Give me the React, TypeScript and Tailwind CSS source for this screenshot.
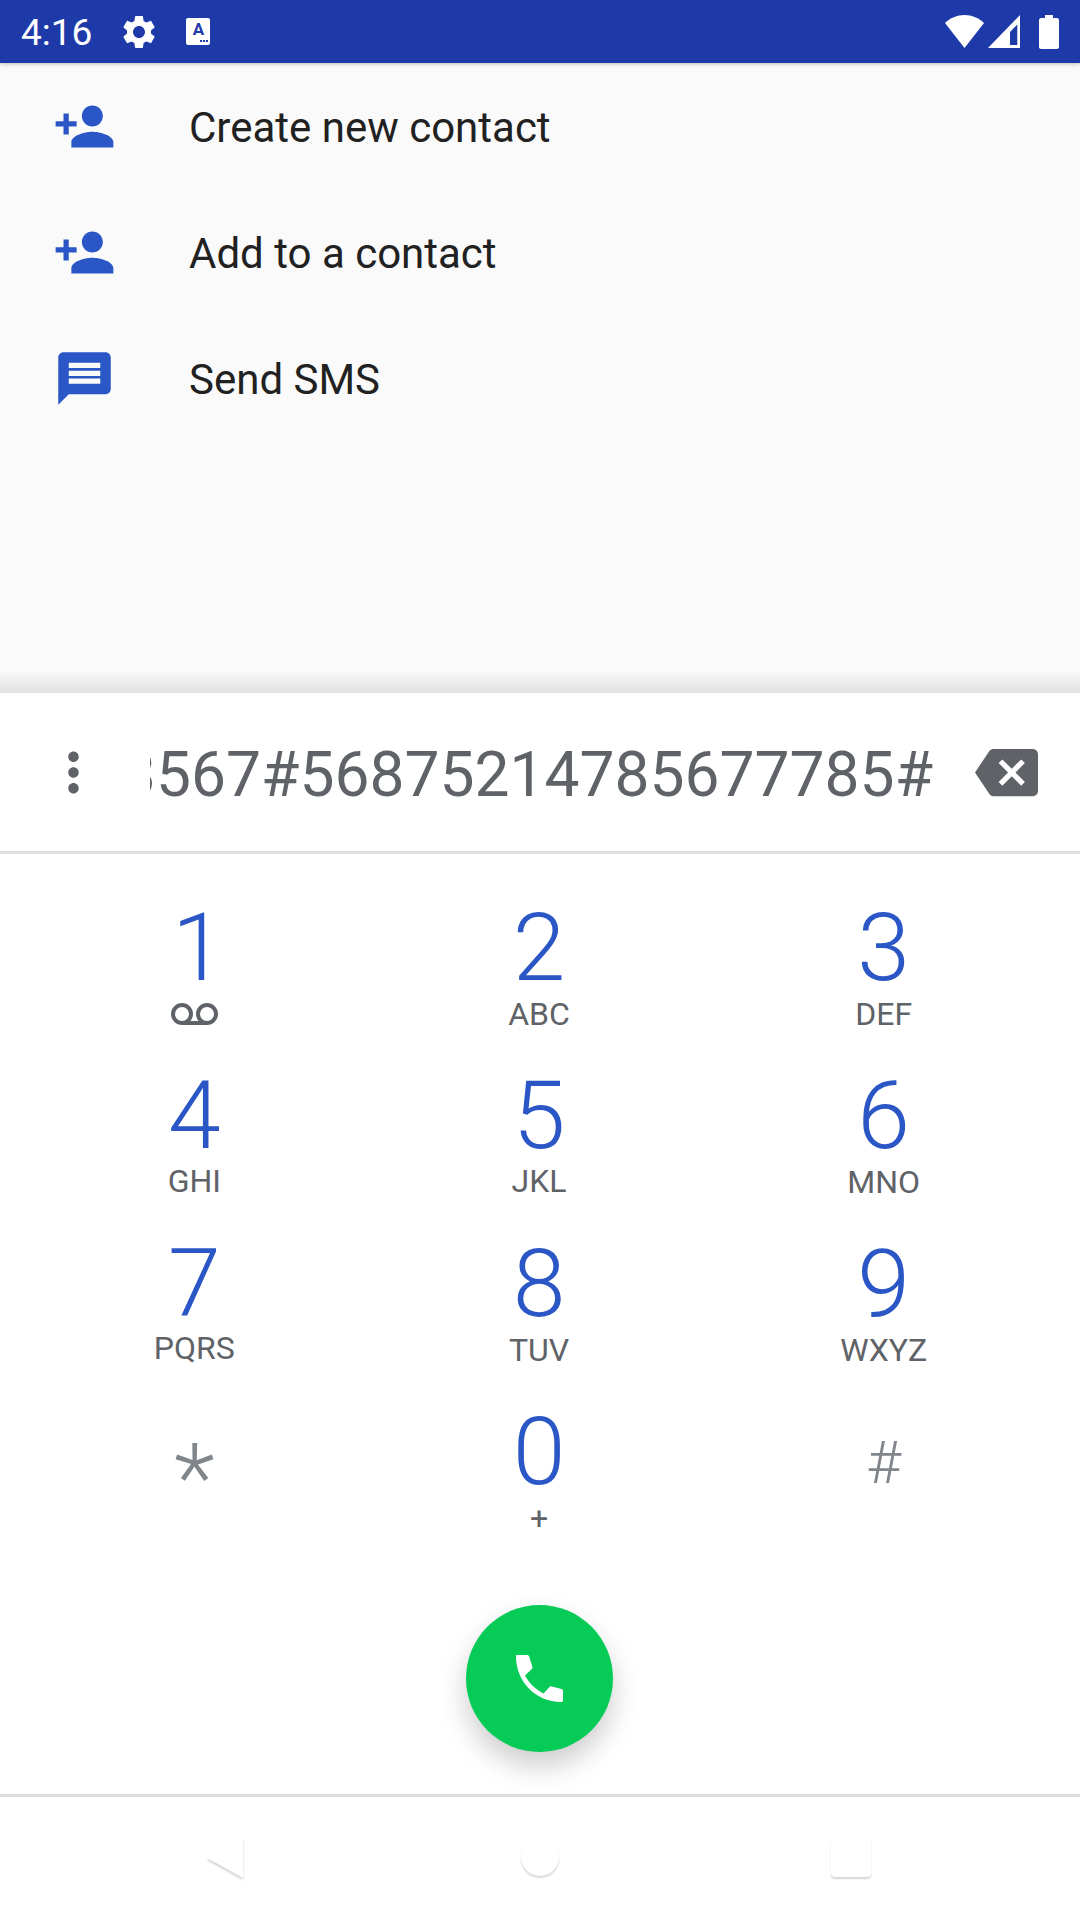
import * as React from "react";

const BLUE = "#2a56c6";

const keys = [
  { d: "1", sub: "vm", subClass: "mt-[3px]" },
  { d: "2", sub: "ABC", subClass: "mt-[3px]" },
  { d: "3", sub: "DEF", subClass: "mt-[3px]" },
  { d: "4", sub: "GHI", subClass: "mt-[2px]" },
  { d: "5", sub: "JKL", subClass: "mt-[2px]" },
  { d: "6", sub: "MNO", subClass: "mt-[3px]" },
  { d: "7", sub: "PQRS", subClass: "mt-[1px]" },
  { d: "8", sub: "TUV", subClass: "mt-[3px]" },
  { d: "9", sub: "WXYZ", subClass: "mt-[3px]" },
  { d: "*", sub: "", subClass: "" },
  { d: "0", sub: "+", subClass: "mt-[3px]" },
  { d: "#", sub: "", subClass: "" },
];

function Icon({ d, className, fill }: { d: string; className?: string; fill: string }) {
  return (
    <svg viewBox="0 0 24 24" className={className} fill={fill}>
      <path d={d} />
    </svg>
  );
}

const PERSON_ADD =
  "M15 12c2.21 0 4-1.79 4-4s-1.79-4-4-4-4 1.79-4 4 1.79 4 4 4zm-9-2V7H4v3H1v2h3v3h2v-3h3v-2H6zm9 4c-2.67 0-8 1.34-8 4v2h16v-2c0-2.66-5.33-4-8-4z";
const MESSAGE =
  "M20 2H4c-1.1 0-1.99.9-1.99 2L2 22l4-4h14c1.1 0 2-.9 2-2V4c0-1.1-.9-2-2-2zm-2 12H6v-2h12v2zm0-3H6V9h12v2zm0-3H6V6h12v2z";

function ActionRow({ icon, label }: { icon: string; label: string }) {
  return (
    <div className="flex h-[126px] items-center pl-[53px]">
      <Icon d={icon} fill={BLUE} className="h-[63px] w-[63px]" />
      <span className="ml-[73px] pt-[2px] text-[42px] text-[#212121]">{label}</span>
    </div>
  );
}

function DialKey({ d, sub, subClass }: { d: string; sub: string; subClass: string }) {
  let digitClass = "text-[95px] leading-[95px] font-light text-[#2a56c6]";
  if (d === "1") digitClass = "pl-[8px] text-[95px] leading-[95px] font-light text-[#2a56c6]";
  if (d === "*") digitClass = "mt-[26px] text-[95px] leading-[95px] font-light text-[#80868b]";
  if (d === "#") digitClass = "mt-[11px] text-[60px] leading-[95px] font-light text-[#80868b]";
  return (
    <div className="flex h-[168px] flex-col items-center">
      <div className={digitClass}>{d}</div>
      {sub === "vm" ? (
        <svg viewBox="0 0 47 22" className="mt-[8px] h-[22px] w-[47px]" fill="none" stroke="#5f6368" strokeWidth="4">
          <circle cx="11" cy="11" r="9" />
          <circle cx="36" cy="11" r="9" />
          <path d="M11 20h25" />
        </svg>
      ) : (
        <div className={`${subClass} text-[32px] leading-[32px] text-[#5f6368]`}>{sub}</div>
      )}
    </div>
  );
}

export default function App() {
  return (
    <div className="flex h-[1920px] w-[1080px] flex-col overflow-hidden bg-white font-['Roboto',sans-serif]">
      {/* status bar */}
      <div className="z-10 flex h-[63px] shrink-0 items-center bg-[#1e3aa8] pl-[21px] pr-[21px] shadow-[0_1px_4px_rgba(0,0,0,0.25)]">
        <span className="pt-[2px] text-[37px] leading-none text-white">4:16</span>
        <svg viewBox="0 0 24 24" fill="#fff" className="ml-[27px] h-[40px] w-[40px]">
          <path d="M19.14 12.94c.04-.3.06-.61.06-.94 0-.32-.02-.64-.07-.94l2.03-1.58c.18-.14.23-.41.12-.61l-1.92-3.32c-.12-.22-.37-.29-.59-.22l-2.39.96c-.5-.38-1.03-.7-1.62-.94l-.36-2.54c-.04-.24-.24-.41-.48-.41h-3.84c-.24 0-.43.17-.47.41l-.36 2.54c-.59.24-1.13.57-1.62.94l-2.39-.96c-.22-.08-.47 0-.59.22L2.74 8.87c-.12.21-.08.47.12.61l2.03 1.58c-.05.3-.09.63-.09.94s.02.64.07.94l-2.03 1.58c-.18.14-.23.41-.12.61l1.92 3.32c.12.22.37.29.59.22l2.39-.96c.5.38 1.03.7 1.62.94l.36 2.54c.05.24.24.41.48.41h3.84c.24 0 .44-.17.47-.41l.36-2.54c.59-.24 1.13-.56 1.62-.94l2.39.96c.22.08.47 0 .59-.22l1.92-3.32c.12-.22.07-.47-.12-.61l-2.01-1.58zM12 15.6c-1.98 0-3.6-1.62-3.6-3.6s1.62-3.6 3.6-3.6 3.6 1.62 3.6 3.6-1.62 3.6-3.6 3.6z" />
        </svg>
        <div className="ml-[27px] flex h-[27px] w-[24px] flex-col items-center rounded-[2px] bg-white">
          <span className="mt-[3px] text-[17px] leading-[17px] font-bold text-[#1e3aa8]">A</span>
          <div className="mt-[2px] flex gap-[1px] self-end pr-[2px]">
            <div className="h-[2px] w-[2px] bg-[#1e3aa8]" />
            <div className="h-[2px] w-[2px] bg-[#1e3aa8]" />
            <div className="h-[2px] w-[2px] bg-[#1e3aa8]" />
          </div>
        </div>
        <div className="flex-1" />
        <svg viewBox="0 0 39 33" fill="#fff" className="h-[33px] w-[39px]">
          <path d="M19.5 33 0 8C5 3 12 0 19.5 0S34 3 39 8z" />
        </svg>
        <svg viewBox="0 0 32 33" fill="#fff" className="ml-[4px] h-[33px] w-[32px]">
          <path fillRule="evenodd" d="M32 0v33H0zM29.3 9.5 22 17v13h7.3z" />
        </svg>
        <svg viewBox="0 0 20 34" fill="#fff" className="ml-[19px] h-[34px] w-[20px]">
          <path d="M6 0h8v3h4c1 0 2 1 2 2v27c0 1-1 2-2 2H2c-1 0-2-1-2-2V5c0-1 1-2 2-2h4z" />
        </svg>
      </div>

      {/* actions */}
      <div className="flex h-[630px] shrink-0 flex-col bg-[#fafafa]">
        <ActionRow icon={PERSON_ADD} label="Create new contact" />
        <ActionRow icon={PERSON_ADD} label="Add to a contact" />
        <ActionRow icon={MESSAGE} label="Send SMS" />
        <div className="flex-1" />
        <div className="h-[22px] bg-gradient-to-b from-[#fafafa] to-[#e0e0e0]" />
      </div>

      {/* digits */}
      <div className="flex h-[161px] shrink-0 items-center border-b-[3px] border-[#e0e0e0] pl-[42px]">
        <svg viewBox="0 0 24 24" fill="#5f6368" className="h-[63px] w-[63px] shrink-0">
          <path d="M12 8c1.1 0 2-.9 2-2s-.9-2-2-2-2 .9-2 2 .9 2 2 2zm0 2c-1.1 0-2 .9-2 2s.9 2 2 2 2-.9 2-2-.9-2-2-2zm0 6c-1.1 0-2 .9-2 2s.9 2 2 2 2-.9 2-2-.9-2-2-2z" />
        </svg>
        <div className="ml-[45px] mt-[5px] flex w-[783px] shrink-0 justify-end overflow-hidden">
          <span className="text-[62.3px] whitespace-nowrap text-[#5f6368]">1233567#56875214785677785#</span>
        </div>
        <svg viewBox="0 0 24 24" fill="#5f6368" className="ml-[42px] h-[63px] w-[63px] shrink-0">
          <path d="M22 3H7c-.69 0-1.23.35-1.59.88L0 12l5.41 8.11c.36.53.9.89 1.59.89h15c1.1 0 2-.9 2-2V5c0-1.1-.9-2-2-2zm-3 12.59L17.59 17 14 13.41 10.41 17 9 15.59 12.59 12 9 8.41 10.41 7 14 10.59 17.59 7 19 8.41 15.41 12 19 15.59z" />
        </svg>
      </div>

      {/* keypad */}
      <div className="grid shrink-0 grid-cols-3 pl-[22px] pr-[24px] pt-[46px]">
        {keys.map((k) => (
          <DialKey key={k.d} d={k.d} sub={k.sub} subClass={k.subClass} />
        ))}
      </div>

      {/* call button */}
      <div className="mt-[33px] flex justify-center pr-[1px]">
        <div className="flex h-[147px] w-[147px] items-center justify-center rounded-full bg-[#06cb56] shadow-[0_14px_28px_rgba(0,0,0,0.2)]">
          <svg viewBox="0 0 47 47" fill="#fff" className="h-[47px] w-[47px]">
            <path d="M1 0h10c1 0 2 .5 2.4 2l3 10c.2.8 0 1.5-.5 2L9 20.5C13 28 19 34 27.5 38.5l6-6.5c.6-.6 1.5-.9 2.5-.6l9.5 2.5c1 .3 1.5 1 1.5 2.3v9c0 1-.5 1.8-2 1.8C20 47 0 27 0 1c0-.6.4-1 1-1z" />
          </svg>
        </div>
      </div>

      <div className="flex-1" />

      {/* nav bar */}
      <div className="flex h-[126px] shrink-0 items-start border-t-[3px] border-[#dcdcdc] pt-[41px]">
        <svg viewBox="0 0 40 44" fill="#fff" className="ml-[205px] h-[44px] w-[40px] drop-shadow-[0_2px_1px_rgba(0,0,0,0.18)]">
          <path d="M38 0v40L2 20z" />
        </svg>
        <div className="ml-[276px] h-[38px] w-[38px] rounded-full bg-white shadow-[0_2px_2px_rgba(0,0,0,0.16)]" />
        <div className="ml-[272px] h-[39px] w-[40px] rounded-[4px] bg-white shadow-[0_2px_2px_rgba(0,0,0,0.16)]" />
      </div>
    </div>
  );
}
